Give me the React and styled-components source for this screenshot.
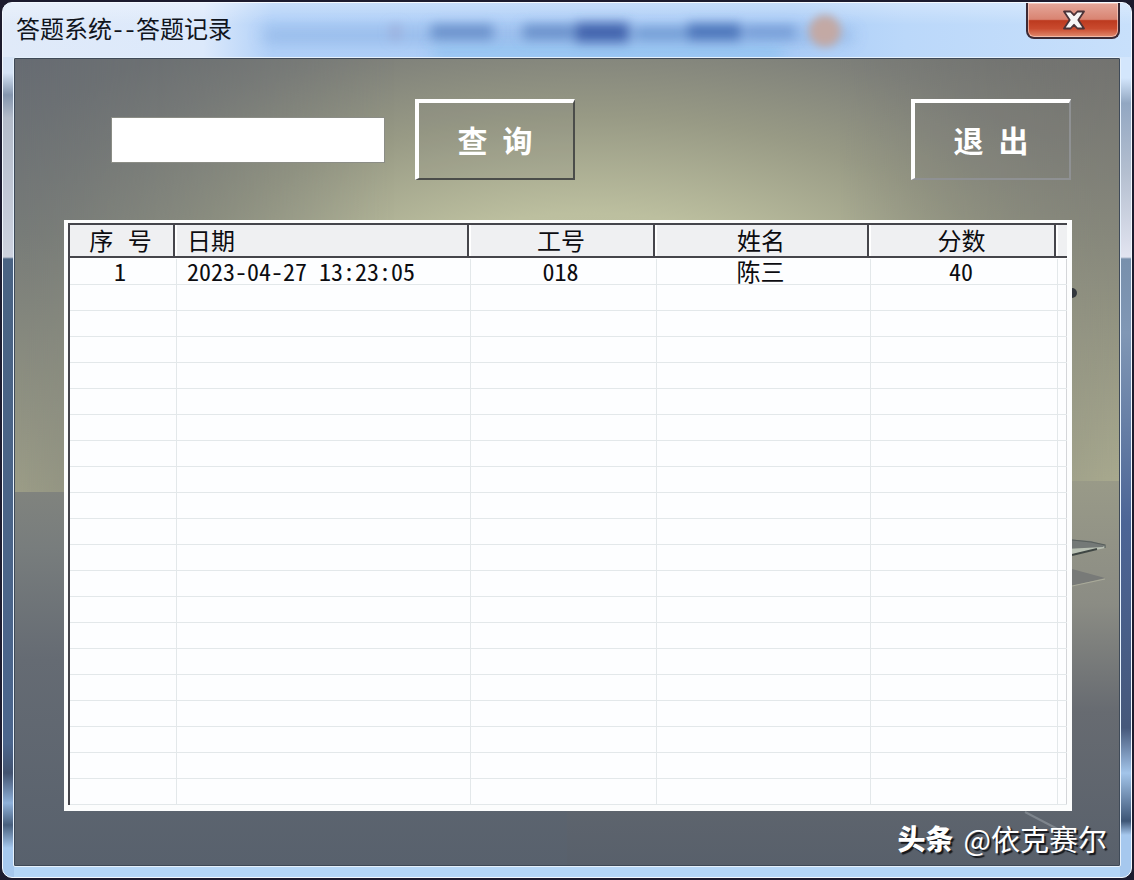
import React from "react";
import styled, { createGlobalStyle } from "styled-components";

const columns = [
  { key: "no", title: "序 号", width: 107 },
  { key: "date", title: "日期", align: "left" },
  { key: "jobNo", title: "工号", width: 186 },
  { key: "name", title: "姓名", width: 214 },
  { key: "score", title: "分数", width: 187 },
];

const records = [
  { no: "1", date: "2023-04-27 13:23:05", jobNo: "018", name: "陈三", score: "40" },
];

const ROW_COUNT = 21;

function App() {
  const rows = Array.from({ length: ROW_COUNT }, (_, i) => records[i] || {});

  return (
    <>
      <GlobalStyle />
      <Window>
        <TitleBar>
          <GlassSmudges />
          <Title>答题系统--答题记录</Title>
          <CloseButton type="button" aria-label="关闭">
            <CloseIcon />
          </CloseButton>
        </TitleBar>
        <Client>
          <Scene />
          <Toolbar>
            <SearchInput type="text" aria-label="查询" />
            <BevelButton type="button" $edge="#4b4d4a">
              查 询
            </BevelButton>
            <Spacer />
            <BevelButton type="button" $edge="#8f9193">
              退 出
            </BevelButton>
          </Toolbar>
          <ListFrame>
            <Table>
              <colgroup>
                {columns.map((c) => (
                  <Col key={c.key} $width={c.width} />
                ))}
                <Col $width={9} />
              </colgroup>
              <thead>
                <tr>
                  {columns.map((c) => (
                    <HeadCell key={c.key} $align={c.align}>
                      {c.title}
                    </HeadCell>
                  ))}
                  <HeadCell as="td" $last />
                </tr>
              </thead>
              <tbody>
                {rows.map((row, i) => (
                  <tr key={i}>
                    {columns.map((c) => (
                      <Cell key={c.key} $align={c.align}>
                        {row[c.key]}
                      </Cell>
                    ))}
                    <Cell $last />
                  </tr>
                ))}
              </tbody>
            </Table>
          </ListFrame>
          <Footer>
            <Brand>头条</Brand>
            <Author>@依克赛尔</Author>
          </Footer>
        </Client>
      </Window>
    </>
  );
}

export default App;

function CloseIcon() {
  return (
    <svg width="24" height="20" viewBox="0 0 24 20" aria-hidden="true">
      <path
        d="M2 1.5H8.5L12 5.2L15.500 1.500H22L16.300 10L22 18.500H15.500L12 14.800L8.500 18.500H2L7.700 10Z"
        fill="#f6f6f6"
        stroke="#4b3338"
        strokeWidth="1.800"
        strokeLinejoin="round"
      />
    </svg>
  );
}

// blurred shapes showing through the glass title bar
function GlassSmudges() {
  return (
    <Smudges viewBox="0 0 1128 54" preserveAspectRatio="none" aria-hidden="true">
      <defs>
        <filter id="soft" filterUnits="userSpaceOnUse" x="0" y="-40" width="1128" height="140">
          <feGaussianBlur stdDeviation="8" />
        </filter>
        <filter id="softer" filterUnits="userSpaceOnUse" x="0" y="-40" width="1128" height="140">
          <feGaussianBlur stdDeviation="6" />
        </filter>
        <filter id="spot" filterUnits="userSpaceOnUse" x="760" y="-40" width="140" height="140">
          <feGaussianBlur stdDeviation="4" />
        </filter>
      </defs>
      <rect x="260" y="28" width="590" height="9" fill="#7fa6dc" opacity="0.8" filter="url(#soft)" />
      <rect x="430" y="44" width="350" height="12" fill="#7fbbec" opacity="0.7" filter="url(#soft)" />
      <g filter="url(#softer)">
        <rect x="388" y="22" width="9" height="14" fill="#9ba3cf" opacity="0.7" />
        <rect x="428" y="22" width="62" height="14" fill="#5a82c0" opacity="0.8" />
        <rect x="520" y="22" width="50" height="14" fill="#5a82c0" opacity="0.8" />
        <rect x="572" y="20" width="54" height="19" fill="#3f62ac" />
        <rect x="632" y="25" width="50" height="11" fill="#628ecb" opacity="0.8" />
        <rect x="684" y="21" width="54" height="16" fill="#4a72b8" />
        <rect x="742" y="23" width="50" height="12" fill="#628aca" opacity="0.7" />
      </g>
      <circle cx="822" cy="28" r="16" fill="#c3a9a4" filter="url(#spot)" />
    </Smudges>
  );
}

// desk and wall behind the controls
function Scene() {
  return (
    <Backdrop viewBox="0 0 1104 806" preserveAspectRatio="none" aria-hidden="true">
      <defs>
        <radialGradient id="lamp" gradientUnits="userSpaceOnUse" cx="0" cy="0" r="1" gradientTransform="translate(575 250) scale(700 320)">
          <stop offset="0" stopColor="#c5c7a6" />
          <stop offset="0.3" stopColor="#bcbf9f" />
          <stop offset="0.6" stopColor="#989a85" />
          <stop offset="0.85" stopColor="#7e807a" />
          <stop offset="1" stopColor="#727573" />
        </radialGradient>
        <linearGradient id="wallLeft" x1="0" y1="0" x2="0" y2="1">
          <stop offset="0" stopColor="#666b72" />
          <stop offset="0.4" stopColor="#777b78" />
          <stop offset="1" stopColor="#9c9d87" />
        </linearGradient>
        <linearGradient id="wallRight" x1="0" y1="0" x2="0" y2="1">
          <stop offset="0" stopColor="#737370" />
          <stop offset="0.4" stopColor="#86877b" />
          <stop offset="1" stopColor="#aaab8f" />
        </linearGradient>
        <linearGradient id="fadeLeft">
          <stop offset="0" stopColor="#fff" />
          <stop offset="0.25" stopColor="#fff" stopOpacity="0.6" />
          <stop offset="1" stopColor="#fff" stopOpacity="0" />
        </linearGradient>
        <linearGradient id="fadeRight" x1="1" x2="0">
          <stop offset="0" stopColor="#fff" />
          <stop offset="1" stopColor="#fff" stopOpacity="0" />
        </linearGradient>
        <mask id="maskLeft">
          <rect width="380" height="434" fill="url(#fadeLeft)" />
        </mask>
        <mask id="maskRight">
          <rect x="824" width="280" height="434" fill="url(#fadeRight)" />
        </mask>
        <linearGradient id="deskLeft" x1="0" y1="0" x2="0" y2="1">
          <stop offset="0" stopColor="#80837e" />
          <stop offset="0.15" stopColor="#787d7d" />
          <stop offset="0.45" stopColor="#656b73" />
          <stop offset="1" stopColor="#58616d" />
        </linearGradient>
        <linearGradient id="deskRight" x1="0" y1="0" x2="0" y2="1">
          <stop offset="0" stopColor="#999a88" />
          <stop offset="0.32" stopColor="#8b8c84" />
          <stop offset="0.6" stopColor="#676b71" />
          <stop offset="1" stopColor="#58606b" />
        </linearGradient>
      </defs>
      <rect width="1104" height="434" fill="url(#lamp)" />
      <rect width="380" height="434" fill="url(#wallLeft)" mask="url(#maskLeft)" />
      <rect x="824" width="280" height="434" fill="url(#wallRight)" mask="url(#maskRight)" />
      <rect y="433" width="1104" height="373" fill="url(#deskLeft)" />
      <rect x="552" y="422" width="552" height="384" fill="url(#deskRight)" />
      <circle cx="1057" cy="234" r="5" fill="#33373c" />
      <path d="M1050 488L1090 486L1090 489L1057 496L1050 497Z" fill="#b9c1b4" />
      <path d="M1050 480L1076 482L1090 486L1088 488L1050 490Z" fill="#747977" />
      <path d="M1057 496L1082 490" fill="none" stroke="#3f4643" strokeWidth="1.800" />
      <path d="M1057 481L1076 483L1090 486V489" fill="none" stroke="#59605d" strokeWidth="1.200" />
      <path d="M1057 510L1090 519L1057 527Z" fill="#787a78" />
      <path d="M1057 527L1090 520" stroke="#a9aa9a" strokeWidth="1.200" />
      <path d="M1010 753L1054 776" stroke="#7e858d" strokeWidth="2" />
    </Backdrop>
  );
}

const GlobalStyle = createGlobalStyle`
  * {
    box-sizing: border-box;
  }
  body {
    margin: 0;
    background: #1c1b2e;
    font-family: "Noto Sans CJK SC", sans-serif;
    font-feature-settings: "hwid";
  }
  button, input {
    font: inherit;
    font-feature-settings: inherit;
  }
`;

const Window = styled.div`
  display: flex;
  flex-direction: column;
  min-height: calc(100vh - 4px);
  margin: 2px;
  border: 1px solid #f4f9ff;
  border-radius: 10px;
  overflow: hidden;
  background:
    linear-gradient(
        #d5e3f6 70px,
        #8495ad 92px,
        #b3bbc9 115px,
        #cdd2df 254px,
        #4a6383 256px,
        #4c668d 740px,
        #435370 770px,
        #8fb1da 800px,
        #485f7d 822px,
        #a6c8ee 845px
      )
      left / 11px 100% no-repeat,
    linear-gradient(
        #d3e6fc 75px,
        #92a7c2 100px,
        #b4bfd0 170px,
        #e2e4f0 254px,
        #7890ac 256px,
        #8097b5 330px,
        #4c6596 520px,
        #46587b 725px,
        #a3c5ea 770px,
        #3d5576 818px,
        #a6c8ee 832px
      )
      right / 11px 100% no-repeat,
    #b4d6f7;
`;

const TitleBar = styled.header`
  position: relative;
  display: flex;
  justify-content: space-between;
  align-items: flex-start;
  height: 54px;
  padding: 0 11px 0 13px;
  background:
    linear-gradient(rgba(255, 255, 255, 0.3), rgba(255, 255, 255, 0) 40%),
    linear-gradient(
      90deg,
      #e0eaf9,
      #dce9fb 200px,
      #b0d0f8 270px,
      #abcdf7 70%,
      #bbd8fa 80%,
      #c8e0fb
    );
`;

const Smudges = styled.svg`
  position: absolute;
  inset: 0;
  width: 100%;
  height: 100%;
`;

const Title = styled.h1`
  position: relative;
  margin: 0;
  color: #10141c;
  font-size: 24px;
  font-weight: 400;
  line-height: 50px;
`;

const CloseButton = styled.button`
  position: relative;
  display: flex;
  align-items: center;
  justify-content: center;
  width: 94px;
  height: 36px;
  padding: 0 0 0 2px;
  border: 2px solid #3b2a35;
  border-top: 0;
  border-radius: 0 0 8px 8px;
  background: linear-gradient(#e5a89b, #d98472 48%, #bd3a1f 52%, #c94a2e 75%, #e08a6e);
  box-shadow: inset 0 0 0 1px rgba(255, 220, 210, 0.6);
`;

const Client = styled.main`
  position: relative;
  display: flex;
  flex-direction: column;
  flex: 1;
  margin: 0 10px 10px;
  border: 1px solid #e6f1fc;
  border-radius: 2px;
  background: #6a7076;
  box-shadow: inset 0 0 0 1px #3f4a58;
  padding: 1px;
`;

const Backdrop = styled.svg`
  position: absolute;
  inset: 1px;
  width: calc(100% - 2px);
  height: calc(100% - 2px);
`;

const Toolbar = styled.div`
  position: relative;
  display: flex;
  align-items: center;
  padding: 40px 48px 40px 96px;
`;

const SearchInput = styled.input`
  width: 274px;
  height: 46px;
  margin-right: 30px;
  padding: 0 8px;
  border: 1px solid #8b8d86;
  background: #fff;
  font-size: 24px;
`;

const BevelButton = styled.button`
  width: 160px;
  height: 81px;
  padding: 0 2px 4px 0;
  border: 2px solid ${(props) => props.$edge};
  border-top: 4px solid #fff;
  border-left: 4px solid #fff;
  background: rgba(120, 120, 125, 0.12);
  color: #fff;
  font-size: 30px;
  font-weight: 700;
  line-height: 40px;
`;

const Spacer = styled.div`
  flex: 1;
`;

const ListFrame = styled.div`
  position: relative;
  margin: 0 47px 0 49px;
  border: solid #fcfdfd;
  border-width: 3px 5px 6px 4px;
  background: #fdfeff;
  box-shadow: inset -1px -1px 0 #d4d6d9;
`;

const Table = styled.table`
  width: 100%;
  table-layout: fixed;
  border-spacing: 0;
  border-top: 2px solid #45454b;
  border-left: 2px solid #45454b;
  color: #0c0c10;
  font-size: 24px;
`;

const Col = styled.col`
  width: ${(props) => (props.$width ? `${props.$width}px` : "auto")};
`;

const HeadCell = styled.th`
  height: 34px;
  padding: ${(props) => (props.$align === "left" ? "4px 6px 0 10px" : "4px 12px 0 6px")};
  background:
    linear-gradient(#45454b, #45454b) 0 31px / 100% 2px no-repeat,
    linear-gradient(#fff, #fff) 0 33px / 100% 1px no-repeat,
    ${(props) =>
      props.$last
        ? ""
        : `linear-gradient(#fff, #fff) right / 2px 100% no-repeat,
           linear-gradient(90deg, #45454b 2px, transparent 2px) right / 4px 100% no-repeat,`}
    #eff0f2;
  font-family: "Liberation Mono", "Noto Sans CJK SC", monospace;
  font-weight: 400;
  line-height: 28px;
  text-align: ${(props) => props.$align || "center"};
`;

const Cell = styled.td`
  height: 26px;
  padding: ${(props) => (props.$align === "left" ? "0 6px 0 10px" : "0 12px 0 6px")};
  border-bottom: 1px solid #e3e8ea;
  border-right: ${(props) => (props.$last ? "0" : "1px solid #e3e8ea")};
  line-height: 24px;
  text-align: ${(props) => props.$align || "center"};
  vertical-align: top;
  white-space: nowrap;
`;

const Footer = styled.footer`
  position: relative;
  display: flex;
  flex: 1;
  align-items: center;
  justify-content: flex-end;
  gap: 10px;
  min-height: 54px;
  padding-right: 12px;
  color: #fff;
  line-height: 40px;
  text-shadow: 2px 2px 1px #14161a;
`;

const Brand = styled.strong`
  font-size: 28px;
  font-weight: 900;
`;

const Author = styled.span`
  font-size: 29px;
  font-feature-settings: normal;
`;
